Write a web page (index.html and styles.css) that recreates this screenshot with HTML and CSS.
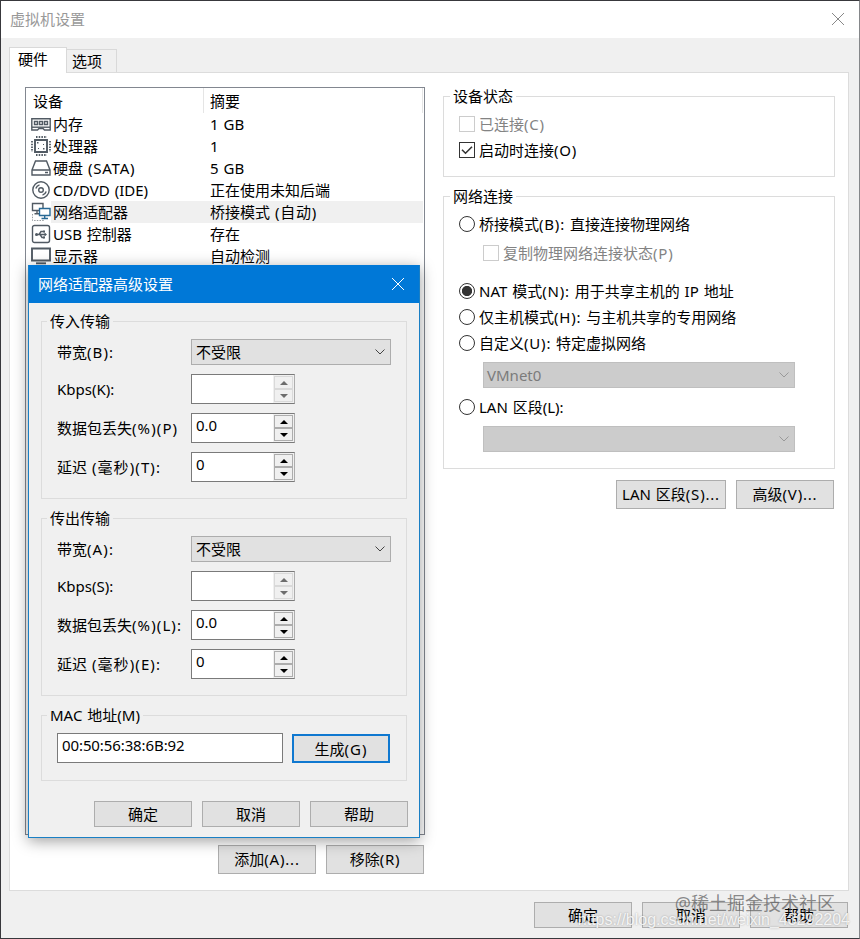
FILE: index.html
```html
<!DOCTYPE html>
<html lang="zh-CN">
<head>
<meta charset="utf-8">
<title>虚拟机设置</title>
<link rel="stylesheet" href="styles.css">
</head>
<body>
<div class="window">
  <header class="titlebar">
    <span class="caption">虚拟机设置</span>
    <svg class="close" width="14" height="14" viewBox="0 0 14 14"><path d="M1 1L13 13M13 1L1 13"/></svg>
  </header>
  <nav class="tabs"><span class="tab active">硬件</span><span class="tab">选项</span></nav>
  <main class="panel">
    <section class="left">
      <div class="devices">
        <div class="head"><span class="c1">设备</span><span class="c2">摘要</span></div>
        <div class="row"><svg class="ico" viewBox="0 0 20 20"><path d="M.8 4.8H19.2V16H13.5L12 14.5H8L6.5 16H.8Z"/><path d="M3.5 7.5h3v3h-3zM8.5 7.5h3v3h-3zM13.5 7.5h3v3h-3z"/><path d="M1 13.2H19"/></svg><span class="name">内存</span><span class="sum">1 GB</span></div>
        <div class="row"><svg class="ico" viewBox="0 0 20 20"><path class="thick" d="M4 4H16V16H4Z"/><path class="pins" d="M5 1H16M5 19H16M1 5V16M19 5V16"/><path class="dot" d="M6 6h1.500v1.500H6zM12 12h1.500v1.500H12zM7 12h1v1H7zM12 8h1v1h-1z"/></svg><span class="name">处理器</span><span class="sum">1</span></div>
        <div class="row"><svg class="ico" viewBox="0 0 20 20"><path d="M1 12L4.500 3H15.500L19 12V17H1ZM1 12H19M14 14.500H17"/></svg><span class="name">硬盘 <s>(SATA)</s></span><span class="sum">5 GB</span></div>
        <div class="row"><svg class="ico" viewBox="0 0 20 20"><circle cx="10" cy="10" r="8.200"/><circle cx="10" cy="10" r="2.300"/><path d="M4.800 8.500Q5.700 5.700 8.500 4.900M15.200 11.500Q14.300 14.300 11.500 15.100"/></svg><span class="name">CD/DVD (IDE)</span><span class="sum">正在使用未知后端</span></div>
        <div class="row sel"><svg class="ico" viewBox="0 0 20 20"><path d="M1.500 1.500H12V8.500H1.500ZM6 9V11.500M3.500 11.700H8" /><path class="blue" d="M8.500 6.500H19V13.500H8.500ZM13.700 14V16.500M10.500 16.500H17"/><path class="pins faint" d="M1.500 12V18.500H13"/></svg><span class="name">网络适配器</span><span class="sum">桥接模式 <s>(自动)</s></span></div>
        <div class="row"><svg class="ico" viewBox="0 0 20 20"><rect x="1.500" y="1.500" width="17" height="17" rx="2"/><path d="M5 10.500H15M8 10.500L10 7.500H12.500M9 10.500L11 13.500H13"/><circle class="dot" cx="5.500" cy="10.500" r="1.500"/><path class="dot" d="M13.500 8.500L16 10.500L13.500 12.500ZM12 6.500h2v2h-2zM12 12.500h2v2h-2z"/></svg><span class="name">USB 控制器</span><span class="sum">存在</span></div>
        <div class="row"><svg class="ico" viewBox="0 0 20 20"><path class="thick" d="M1 2.500H19V14.500H1Z"/><path class="thick" d="M5 17.300H15"/></svg><span class="name">显示器</span><span class="sum">自动检测</span></div>
      </div>
      <div class="actions"><button class="btn">添加<s>(A)...</s></button><button class="btn">移除<s>(R)</s></button></div>
    </section>
    <section class="right">
      <div class="group status">
        <h2>设备状态</h2>
        <label class="opt off"><i class="check"></i><span>已连接<s>(C)</s></span></label>
        <label class="opt"><i class="check"><svg width="14" height="14" viewBox="0 0 14 14"><path d="M2 6.700L5.500 10.200L12 3.700"/></svg></i><span>启动时连接<s>(O)</s></span></label>
      </div>
      <div class="group net">
        <h2>网络连接</h2>
        <label class="opt"><i class="radio"></i><span>桥接模式<s>(B):</s> 直接连接物理网络</span></label>
        <label class="opt off sub"><i class="check"></i><span>复制物理网络连接状态<s>(P)</s></span></label>
        <label class="opt nat"><i class="radio on"></i><span>NAT 模式<s>(N):</s> 用于共享主机的 IP 地址</span></label>
        <label class="opt"><i class="radio"></i><span>仅主机模式<s>(H):</s> 与主机共享的专用网络</span></label>
        <label class="opt"><i class="radio"></i><span>自定义<s>(U):</s> 特定虚拟网络</span></label>
        <div class="select disabled">VMnet0<svg width="12" height="12" viewBox="0 0 12 12"><path d="M1.500 3.500L6 8L10.500 3.500"/></svg></div>
        <label class="opt lan"><i class="radio"></i><span>LAN 区段(L):</span></label>
        <div class="select disabled"><span></span><svg width="12" height="12" viewBox="0 0 12 12"><path d="M1.500 3.500L6 8L10.500 3.500"/></svg></div>
      </div>
      <div class="actions"><button class="btn wide">LAN 区段<s>(S)...</s></button><button class="btn">高级<s>(V)...</s></button></div>
    </section>
  </main>
  <footer class="footer"><button class="btn">确定</button><button class="btn">取消</button><button class="btn">帮助</button></footer>

  <div class="dialog">
    <header><span>网络适配器高级设置</span><svg width="14" height="14" viewBox="0 0 14 14"><path d="M1 1L13 13M13 1L1 13"/></svg></header>
    <div class="group xfer">
      <h2>传入传输</h2>
      <div class="field combo"><span>带宽<s>(B):</s></span><div class="select">不受限<svg width="12" height="12" viewBox="0 0 12 12"><path d="M1.500 3.500L6 8L10.500 3.500"/></svg></div></div>
      <div class="field"><span>Kbps(K):</span><div class="spin dim"><b></b><div class="arrows"><i></i><i class="down"></i></div></div></div>
      <div class="field"><span>数据包丢失<s>(%)(P)</s></span><div class="spin"><b>0.0</b><div class="arrows"><i></i><i class="down"></i></div></div></div>
      <div class="field"><span>延迟 <s>(毫秒)(T):</s></span><div class="spin"><b>0</b><div class="arrows"><i></i><i class="down"></i></div></div></div>
    </div>
    <div class="group xfer second">
      <h2>传出传输</h2>
      <div class="field combo"><span>带宽<s>(A):</s></span><div class="select">不受限<svg width="12" height="12" viewBox="0 0 12 12"><path d="M1.500 3.500L6 8L10.500 3.500"/></svg></div></div>
      <div class="field"><span>Kbps(S):</span><div class="spin dim"><b></b><div class="arrows"><i></i><i class="down"></i></div></div></div>
      <div class="field"><span>数据包丢失<s>(%)(L):</s></span><div class="spin"><b>0.0</b><div class="arrows"><i></i><i class="down"></i></div></div></div>
      <div class="field"><span>延迟 <s>(毫秒)(E):</s></span><div class="spin"><b>0</b><div class="arrows"><i></i><i class="down"></i></div></div></div>
    </div>
    <div class="group mac">
      <h2>MAC 地址(M)</h2>
      <div class="macrow"><div class="text">00:50:56:38:6B:92</div><button class="btn focus">生成<s>(G)</s></button></div>
    </div>
    <div class="buttons"><button class="btn">确定</button><button class="btn">取消</button><button class="btn">帮助</button></div>
  </div>
  <div class="mark url">https://blog.csdn.net/weixin_43292204</div>
  <div class="mark site">@稀土掘金技术社区</div>
</div>
</body>
</html>
```
FILE: styles.css
```css
* { box-sizing: border-box; }
body { margin: 0; }
svg { fill: none; stroke: currentColor; flex: none; }
.window, button {
  font: 15px/20px "Noto Sans", "Noto Sans CJK SC", sans-serif;
  color: #000;
  word-spacing: 1px;
}
.window {
  position: relative;
  width: 860px; height: 939px;
  background: #f0f0f0;
  border: 1px solid #38383c;
  border-right-color: #85878a;
  display: flex; flex-direction: column;
  overflow: hidden;
  white-space: nowrap;
}
/* Accelerator suffixes are set slightly wider than the label text. */
s { text-decoration: none; letter-spacing: .8px; }
.titlebar {
  height: 37px; background: #fff; color: #999;
  display: flex; align-items: center; justify-content: space-between;
  padding: 0 14px 2px 9px;
}
.close { color: #888; }
.tabs { display: flex; align-items: flex-end; height: 34px; padding-left: 8px; }
.tab {
  width: 50px; height: 23px; padding: 1px 0 0 5px;
  border: 1px solid #d9d9d9; border-left: 0; border-bottom: 0;
}
.tab.active {
  position: relative;
  width: 58px; height: 26px; margin-bottom: -1px;
  padding: 1px 0 0 8px;
  border-left: 1px solid #d9d9d9; background: #fff;
}
.panel {
  display: flex; gap: 18px;
  margin: 0 10px 0 8px; height: 819px;
  padding: 14px 13px 0 15px;
  background: #fff; border: 1px solid #dcdcdc;
}
.left { width: 400px; }
.devices { height: 748px; border: 1px solid #828790; padding-right: 1px; }
.head { display: flex; height: 25px; line-height: 26px; }
.head .c1 { width: 178px; padding-left: 7px; border-right: 1px solid #e5e5e5; }
.head .c2 { flex: 1; padding-left: 6px; border-right: 1px solid #e5e5e5; }
.row { display: flex; height: 22px; line-height: 22px; padding-left: 5px; }
.row.sel { background: linear-gradient(#f0f0f0, #f0f0f0) 25px 0 no-repeat; }
.ico { width: 20px; height: 20px; margin-top: 1px; color: #515a63; stroke-width: 1.4; }
.name { width: 157px; padding-left: 2px; }
.sum { padding-left: 2px; }
.dot { fill: currentColor; stroke: none; }
.pins { stroke-dasharray: 1.5 1.2; stroke-width: 1.8; }
.pins.faint { stroke-width: 1; opacity: .6; }
.blue { stroke: #286995; fill: #fff; }
.thick { stroke-width: 1.9; }
.actions { display: flex; gap: 10px; justify-content: flex-end; margin-top: 10px; padding-right: 1px; }
.btn {
  width: 98px; height: 29px; padding: 0;
  background: #e1e1e1; border: 1px solid #adadad; border-radius: 0;
  text-align: center;
}
.btn.wide { width: 110px; }
.btn.focus { border: 2px solid #0f78d0; }
.panel .btn { padding-bottom: 2px; }
.right { width: 392px; padding-top: 9px; }
.group { border: 1px solid #dcdcdc; }
.group h2 {
  width: max-content; margin: -11px 0 0 6px; padding: 0 3px;
  height: 20px; background: #fff;
  font-size: 15px; font-weight: 400; line-height: 20px;
}
.status { height: 81px; }
.status h2 + .opt { margin-top: 5px; }
.opt { display: flex; align-items: center; height: 26px; padding-left: 15px; }
.opt i { flex: none; width: 16px; height: 16px; margin-right: 4px; border: 1px solid #333; display: block; }
.opt svg { display: block; color: #333; stroke-width: 1.6; }
.opt.off { color: #838383; }
.opt.off i { border-color: #ccc; }
.radio { border-radius: 50%; }
.radio.on { background: radial-gradient(circle, #333 4.7px, #fff 5.5px); }
.net { height: 273px; margin-top: 19px; }
.net h2 + .opt { margin-top: 5px; }
.opt.sub { padding-left: 39px; margin-top: 3px; }
.opt.nat { margin-top: 12px; }
.select {
  display: flex; align-items: center; justify-content: space-between;
  width: 200px; height: 26px; padding: 0 4px;
  background: #e1e1e1; border: 1px solid #adadad;
}
.select svg { color: #444; }
.select.disabled {
  width: 312px; margin: 6px 0 0 39px; padding-left: 3px;
  background: #ccc; border-color: #bfbfbf; color: #7b7b7b;
}
.select.disabled svg { color: #999; }
.opt.lan + .select.disabled { margin-top: 6px; }
.opt.lan { margin-top: 6px; }
.right .actions { margin-top: 11px; }
.footer { display: flex; justify-content: flex-end; gap: 10px; padding: 11px 11px 0 0; }
.footer .btn, .buttons .btn { height: 26px; }

.dialog {
  position: absolute; left: 27px; top: 264px;
  width: 392px; height: 573px;
  background: #f0f0f0; border: 1px solid #1a7fc4; border-top: 0;
  box-shadow: 0 3px 14px rgba(0, 0, 0, .38);
}
.dialog header {
  display: flex; align-items: center; justify-content: space-between;
  height: 38px; padding: 0 14px 0 9px;
  background: #0078d7; color: #fff;
}
.dialog s { letter-spacing: 1.1px; }
.dialog .group { width: 366px; margin-left: 12px; }
.dialog .group h2 { background: #f0f0f0; margin-left: 5px; }
.xfer { height: 178px; margin-top: 18px; }
.xfer.second { margin-top: 19px; }
.field { display: flex; align-items: center; height: 30px; margin-bottom: 9px; padding-left: 15px; }
.field > span { width: 134px; }
.field.combo { height: 26px; margin-top: 8px; }
.spin { display: flex; width: 104px; height: 30px; border: 1px solid #7a7a7a; border-right-color: #adadad; background: #fff; }
.spin b { width: 81px; padding: 1px 0 0 4px; font-weight: 400; }
.arrows { flex: 1; display: flex; flex-direction: column; padding: 1px; background: #f0f0f0; }
.arrows i {
  flex: 1; display: grid; place-items: center;
  border: 1px solid #adadad; background: #f0f0f0;
}
.arrows i::before { content: ""; border: 4px solid transparent; border-top: 0; border-bottom: 4px solid #000; }
.arrows i.down::before { border-bottom: 0; border-top: 4px solid #000; }
.dim .arrows i { border-color: #d9d9d9; }
.dim .arrows i::before { border-bottom-color: #6d6d6d; }
.dim .arrows i.down::before { border-top-color: #6d6d6d; }
.mac { height: 66px; margin-top: 19px; }
.macrow { display: flex; align-items: flex-end; gap: 9px; margin: 8px 0 0 15px; }
.text { width: 226px; height: 30px; padding: 1px 4px; background: #fff; border: 1px solid #7a7a7a; letter-spacing: -.1px; }
.buttons { display: flex; gap: 10px; margin: 20px 0 0 65px; }
.mark { position: absolute; pointer-events: none; }
.url { right: 9px; top: 909px; font: 16px/20px "Liberation Sans", sans-serif; color: rgba(255, 255, 255, .85); text-shadow: 0 0 2px rgba(0, 0, 0, .3); }
.site { right: 24px; top: 891px; font-size: 18px; line-height: 22px; color: rgba(90, 90, 90, .7); }
```
